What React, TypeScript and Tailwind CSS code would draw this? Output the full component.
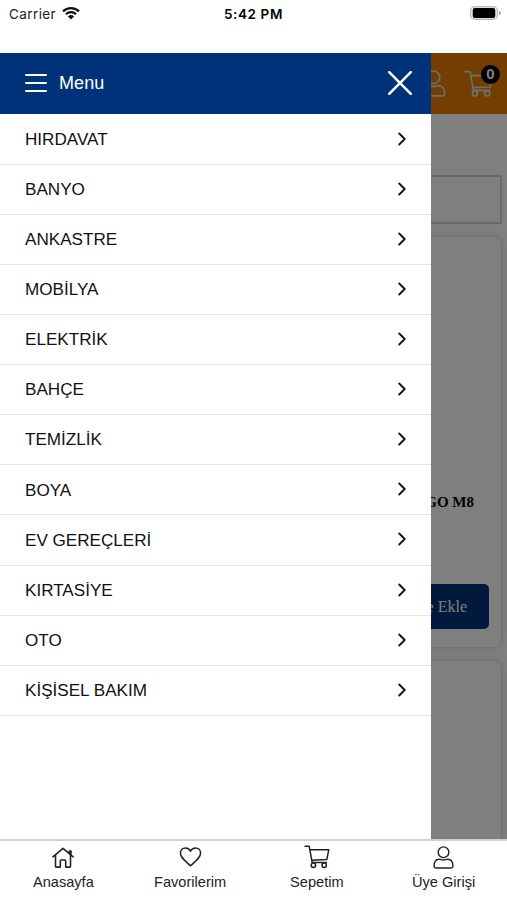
import { useState, type ReactNode } from "react";

const categories = [
  "HIRDAVAT",
  "BANYO",
  "ANKASTRE",
  "MOBİLYA",
  "ELEKTRİK",
  "BAHÇE",
  "TEMİZLİK",
  "BOYA",
  "EV GEREÇLERİ",
  "KIRTASİYE",
  "OTO",
  "KİŞİSEL BAKIM",
];

type IconProps = { className?: string };

function CartIcon({ className }: IconProps) {
  return (
    <svg
      viewBox="0 0 26 24"
      fill="none"
      stroke="currentColor"
      strokeWidth="1.5"
      strokeLinecap="round"
      strokeLinejoin="round"
      className={className}
    >
      <path d="M1 1.3h4.2l3 16.3h14.1M5.9 4.7h18.9l-2 9.9-15.1.6" />
      <circle cx="9.4" cy="20.2" r="2.2" />
      <circle cx="20.2" cy="20.2" r="2.2" />
    </svg>
  );
}

function UserIcon({ className }: IconProps) {
  return (
    <svg
      viewBox="0 0 22 24"
      fill="none"
      stroke="currentColor"
      strokeWidth="1.5"
      strokeLinejoin="round"
      className={className}
    >
      <circle cx="11" cy="6.5" r="5.6" />
      <path d="M3 23h16c1.2 0 1.900-.7 1.900-1.800 0-4.300-1.600-7.300-5.400-7.300-1.600 0-2.500.8-4.500.8s-2.900-.8-4.500-.8c-3.800 0-5.400 3-5.400 7.300C1.100 22.300 1.800 23 3 23z" />
    </svg>
  );
}

function HouseIcon({ className }: IconProps) {
  return (
    <svg
      viewBox="0 0 22 21"
      fill="none"
      stroke="currentColor"
      strokeWidth="1.6"
      strokeLinecap="round"
      strokeLinejoin="round"
      className={className}
    >
      <path d="M.9 9.8 11 1.3l10.1 8.500M17.300 6.500V4h1.700v4" />
      <path d="M3.500 8v11.200c0 .6.300.9.900.9h3.900v-6.200c0-.6.300-.9.900-.9h3.600c.6 0 .9.300.9.900v6.200h3.900c.6 0 .9-.3.900-.9V8" />
    </svg>
  );
}

function HeartIcon({ className }: IconProps) {
  return (
    <svg
      viewBox="0 0 22 20"
      fill="none"
      stroke="currentColor"
      strokeWidth="1.5"
      strokeLinejoin="round"
      className={className}
    >
      <path d="M11 18.800C5.500 14 .9 10.700.9 6.100.9 3 3.200.9 6 .9c2.300 0 4.100 1.400 5 3.300.9-1.900 2.700-3.300 5-3.300 2.800 0 5.100 2.100 5.100 5.200 0 4.600-4.600 7.900-10.100 12.700z" />
    </svg>
  );
}

function StatusBar() {
  return (
    <div className="grid h-[53px] shrink-0 grid-cols-3 items-start bg-white px-[9px] pt-[5px] font-['Inter','Liberation_Sans',sans-serif] text-[13.5px] leading-[18px] text-[#222]">
      <div className="flex items-center gap-[6px]">
        <span className="tracking-[0.4px]">Carrier</span>
        <svg viewBox="0 0 18 14" className="-mt-[3px] h-[14px] w-[18px]" fill="none" stroke="#111" strokeWidth="2.3">
          <path d="M1 5.400a11.500 11.500 0 0 1 16 0M3.900 8.300a7.300 7.300 0 0 1 10.200 0" />
          <path d="M9 13.500 5.900 10.400a4.500 4.500 0 0 1 6.200 0z" fill="#111" stroke="none" />
        </svg>
      </div>
      <div className="text-center font-semibold tracking-[0.6px] whitespace-nowrap text-black">
        5:42 PM
      </div>
      <svg viewBox="0 0 31 14" className="mt-px mr-[-3px] h-[14px] w-[31px] justify-self-end">
        <rect x=".7" y=".7" width="26.6" height="12.6" rx="4" fill="#fff" stroke="#bbb" strokeWidth="1.4" />
        <rect x="2.7" y="2" width="22.6" height="10" rx="2" fill="#000" />
        <path d="M29 5v4.200c1.500-.5 1.800-1.200 1.800-2.100S30.500 5.500 29 5z" fill="#999" />
      </svg>
    </div>
  );
}

function ProductCard({ children }: { children?: ReactNode }) {
  return (
    <div className="flex h-[412px] shrink-0 flex-col justify-end rounded-[8px] border border-[#e4e4e4] bg-white px-[12px] pb-[18px] font-['Liberation_Serif',serif] shadow-[0_0_8px_rgba(0,0,0,0.12)]">
      {children}
    </div>
  );
}

function Shop() {
  return (
    <div className="flex h-full flex-col overflow-hidden bg-white">
      <header className="flex h-[61px] shrink-0 items-center justify-end gap-[18px] bg-[#e67c00] pr-[13px] text-[#ddd]">
        <UserIcon className="h-[27px] w-[25px]" />
        <div className="relative">
          <CartIcon className="h-[28px] w-[30px]" />
          <span className="absolute -top-[5px] -right-[6px] flex size-[19px] items-center justify-center rounded-full bg-black font-['Liberation_Sans',sans-serif] text-[15px] font-bold text-white">
            0
          </span>
        </div>
      </header>
      <div className="flex flex-col gap-[12px] px-[5px] pt-[61px]">
        <div className="h-[49px] shrink-0 border-2 border-[#d2d2d2]" />
        <ProductCard>
          <div className="h-[91px] pr-[15px] text-right text-[15px] leading-[18px] font-bold text-black">
            CIVATA PROGO M8
          </div>
          <button className="h-[45px] w-[220px] self-end rounded-[5px] bg-[#003279] pr-[22px] text-right text-[16px] text-white">
            Sepete Ekle
          </button>
        </ProductCard>
        <ProductCard />
      </div>
    </div>
  );
}

function Drawer({ onClose }: { onClose: () => void }) {
  return (
    <aside className="absolute inset-y-0 left-0 w-[431px] bg-white">
      <div className="flex h-[61px] items-center bg-[#003279] pr-[19px] pl-[25px] text-white">
        <div className="-mt-[2px] flex w-[22px] flex-col gap-[6px]">
          <span className="h-[2px] rounded-full bg-white" />
          <span className="h-[2px] rounded-full bg-white" />
          <span className="h-[2px] rounded-full bg-white" />
        </div>
        <span className="ml-[12px] text-[18px] tracking-[0.1px]">Menu</span>
        <button onClick={onClose} aria-label="Kapat" className="mt-[-2px] ml-auto">
          <svg viewBox="0 0 24 24" className="size-[24px]" stroke="currentColor" strokeWidth="2.5" strokeLinecap="round">
            <path d="M1.200 1.200 22.800 22.800M22.800 1.200 1.200 22.800" />
          </svg>
        </button>
      </div>
      <ul className="pt-[0.7px]">
        {categories.map((category) => (
          <li
            key={category}
            className="flex h-[50.1px] items-center justify-between border-b border-[#e4e4e4] px-[25px] text-[17.1px] text-[#111]"
          >
            <span className="pt-px">{category}</span>
            <svg viewBox="0 0 8 14" className="-mt-px h-[14px] w-[8px]" fill="none" stroke="#111" strokeWidth="1.8" strokeLinecap="round" strokeLinejoin="round">
              <path d="M1.200 1.500 6.700 7 1.200 12.500" />
            </svg>
          </li>
        ))}
      </ul>
    </aside>
  );
}

function TabItem({ label, children }: { label: string; children: ReactNode }) {
  return (
    <button className="flex flex-col items-center pt-[4px] text-[14.6px] leading-[18px] text-[#222]">
      <span className="mb-[4px] flex h-[24px] items-center">{children}</span>
      {label}
    </button>
  );
}

export default function App() {
  const [menuOpen, setMenuOpen] = useState(true);

  return (
    <div className="flex h-[900px] w-[507px] flex-col overflow-hidden bg-white font-['Liberation_Sans',Arial,sans-serif]">
      <StatusBar />
      <main className="relative min-h-0 flex-1 overflow-hidden">
        <Shop />
        {menuOpen && (
          <>
            <div className="absolute inset-0 bg-black/50" onClick={() => setMenuOpen(false)} />
            <Drawer onClose={() => setMenuOpen(false)} />
          </>
        )}
      </main>
      <nav className="grid h-[61px] shrink-0 grid-cols-4 border-t-2 border-[#d0d0d0] bg-white">
        <TabItem label="Anasayfa">
          <HouseIcon className="h-[21px] w-[22px]" />
        </TabItem>
        <TabItem label="Favorilerim">
          <HeartIcon className="h-[20px] w-[23px]" />
        </TabItem>
        <TabItem label="Sepetim">
          <CartIcon className="h-[24px] w-[26px]" />
        </TabItem>
        <TabItem label="Üye Girişi">
          <UserIcon className="h-[23px] w-[21px]" />
        </TabItem>
      </nav>
    </div>
  );
}
